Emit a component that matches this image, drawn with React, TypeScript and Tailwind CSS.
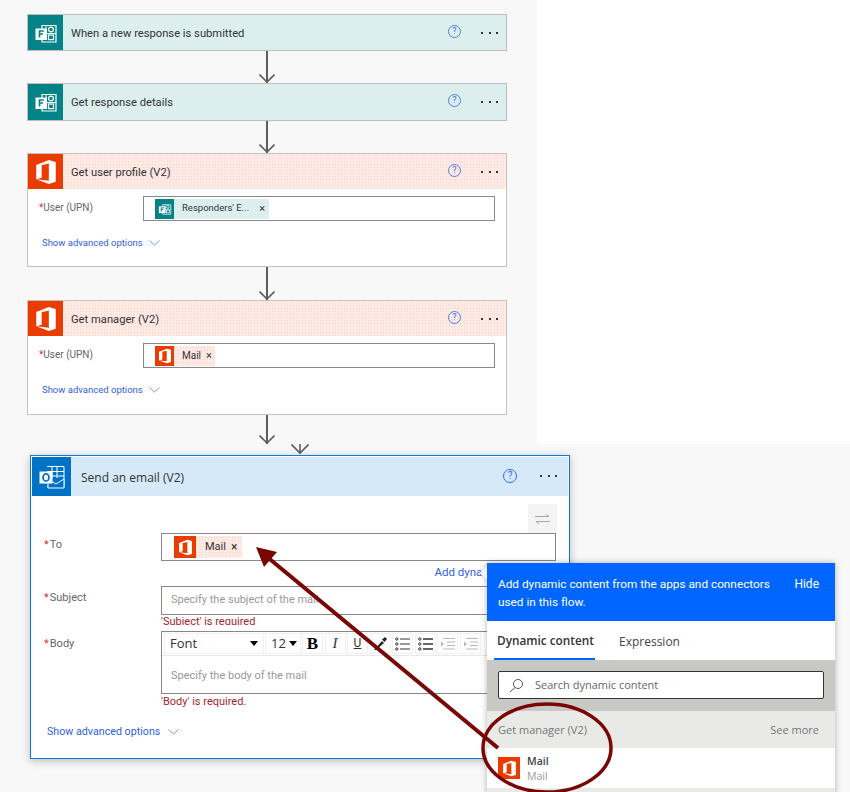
import React from "react";

const FONT = "font-['Roboto','Open_Sans',sans-serif]";
const OPEN = "font-['Open_Sans','Noto_Sans',sans-serif]";
const PINK = "bg-[#feeae5] bg-[radial-gradient(#fbd0c8_0.6px,transparent_0.7px)] bg-[length:3px_3px]";
const TEAL = "bg-[#dcefee] bg-[radial-gradient(#b9e2e2_0.6px,transparent_0.7px)] bg-[length:2px_2px]";
const TEXTURE = "bg-[#f8f8f8]";

function FormsIcon({ size = 24 }: { size?: number }) {
  return (
    <svg width={size} height={size} viewBox="0 0 24 24" fill="none">
      <path d="M8 4.5 H22 V21 H8 Z" stroke="#fff" strokeWidth="1.2" />
      <path d="M12 12.5 H22 M12 4.5 V9" stroke="#fff" strokeWidth="1" />
      <circle cx="17" cy="8.5" r="2.4" stroke="#fff" strokeWidth="1.2" />
      <rect x="14.5" y="14" width="5" height="4.6" stroke="#fff" strokeWidth="1.2" />
      <rect x="1.5" y="7.5" width="11.5" height="11.5" fill="#fff" />
      <path d="M5.5 16.5 V10 H9.8 M5.5 13 H9" stroke="#038387" strokeWidth="1.7" />
    </svg>
  );
}

function OfficeIcon({ size = 26 }: { size?: number }) {
  return (
    <svg width={size} height={size} viewBox="0 0 24 24">
      <path
        fillRule="evenodd"
        fill="#fff"
        d="M3 5.6 L14.6 1 L21 2.8 V21 L14.6 23 L3 18.7 Z M14.6 4.2 L8 5.8 V17.4 L3 18.7 L14.6 20 Z"
      />
    </svg>
  );
}

function OutlookIcon() {
  return (
    <svg width="26" height="26" viewBox="0 0 26 26" fill="none">
      <path d="M8 2.5 H25 V22.5 H8" stroke="#fff" strokeWidth="1" />
      <path d="M13 2.5 V14 M18 2.5 V14 M8 7.5 H25 M8 12 H25" stroke="#fff" strokeWidth="1" />
      <path d="M9 15 L17 20 L25 15 V24 H9 Z" fill="#0072c6" stroke="#fff" strokeWidth="1" />
      <rect x="0.5" y="7.5" width="13" height="12" fill="#fff" />
      <ellipse cx="7" cy="13.5" rx="3" ry="3.6" stroke="#0072c6" strokeWidth="1.8" />
    </svg>
  );
}

function Help({ big = false }: { big?: boolean }) {
  return (
    <span
      className={
        big
          ? "flex h-[14px] w-[14px] items-center justify-center rounded-full border border-[#2f6fe8] text-[10px] leading-none text-[#2f6fe8]"
          : "flex h-[13px] w-[13px] items-center justify-center rounded-full border border-[#4a80f0] text-[9px] leading-none text-[#3f6fe0]"
      }
    >
      ?
    </span>
  );
}

function Dots() {
  return (
    <span className="flex items-center gap-[5.5px]">
      <i className="h-[2px] w-[2px] bg-[#333]" />
      <i className="h-[2px] w-[2px] bg-[#333]" />
      <i className="h-[2px] w-[2px] bg-[#333]" />
    </span>
  );
}

function Header({
  tile,
  bg,
  title,
  icon,
}: {
  tile: string;
  bg: string;
  title: string;
  icon: React.ReactNode;
}) {
  return (
    <div className={`flex h-[35px] items-center ${bg}`}>
      <div className={`flex h-full w-[35px] shrink-0 items-center justify-center ${tile}`}>{icon}</div>
      <span className="ml-2 flex-1 pt-[3px] text-[11.2px] text-[#333]">{title}</span>
      <span className="mr-[20px] -mt-[3px]">
        <Help />
      </span>
      <span className="mr-[8px] w-[17px]">
        <Dots />
      </span>
    </div>
  );
}

function Connector({ h }: { h: string }) {
  return (
    <div className={`relative ml-[239px] w-[2px] bg-[#605e5c] ${h}`}>
      <svg
        className="absolute bottom-0 -left-[7px]"
        width="16"
        height="9"
        viewBox="0 0 16 9"
        fill="none"
      >
        <path d="M0.5 0.5 L8 8 L15.5 0.5" stroke="#605e5c" strokeWidth="1.6" />
      </svg>
    </div>
  );
}

function Chevron({ className = "" }: { className?: string }) {
  return (
    <svg className={className} width="11" height="6" viewBox="0 0 11 6" fill="none">
      <path d="M0.5 0.5 L5.5 5 L10.5 0.5" stroke="#5a8ee8" strokeWidth="0.9" />
    </svg>
  );
}

function UserCard({
  tile,
  title,
  chip,
  h,
}: {
  tile: string;
  title: string;
  chip: React.ReactNode;
  h: string;
}) {
  return (
    <div className={`border border-[#c4c2bf] bg-white ${h}`}>
      <Header tile={tile} bg={PINK} title={title} icon={<OfficeIcon />} />
      <div className="mt-[7px] flex pr-[11px]">
        <div className="w-[115px] pl-[11px] text-[10px] leading-[23px] text-[#666]">
          <span className="text-[#d13438]">*</span>
          <span>User (UPN)</span>
        </div>
        <div className="flex h-[25px] flex-1 items-center border border-[#8a8886] pl-[11px]">{chip}</div>
      </div>
      <div className="mt-[15px] flex items-center pl-[14px] text-[9.5px] text-[#2f5fe0]">
        Show advanced options
        <Chevron className="ml-[6px]" />
      </div>
    </div>
  );
}

function Field({ label, lead, children }: { label: string; lead: string; children: React.ReactNode }) {
  return (
    <div className="flex">
      <div className={`w-[129px] pl-[12px] text-[11px] text-[#666] ${lead}`}>
        <span className="text-[#d13438]">*</span>
        <span className="ml-[1px]">{label}</span>
      </div>
      <div className="flex-1">{children}</div>
    </div>
  );
}

function ToolButton({ children }: { children: React.ReactNode }) {
  return (
    <div className="flex h-[21px] w-[21px] items-center justify-center border border-[#f0f0f0]">{children}</div>
  );
}

function ListGlyph({ faded = false, num = false }: { faded?: boolean; num?: boolean }) {
  const c = faded ? "#b8b8b8" : "#333";
  return (
    <svg width="15" height="14" viewBox="0 0 15 14" fill="none">
      {faded ? (
        <>
          <path d="M3 1.5 H15 M7 5 H15 M7 8.5 H15 M3 12 H15" stroke={c} />
          <path d="M1 4.5 L4 7 L1 9.5 Z" fill={c} />
        </>
      ) : (
        <>
          <path d="M5 2 H15 M5 7 H15 M5 12 H15" stroke={c} strokeWidth={num ? 1.6 : 1} />
          <circle cx="1.8" cy="2" r="1.2" stroke={c} />
          <circle cx="1.8" cy="7" r="1.2" stroke={c} />
          <circle cx="1.8" cy="12" r="1.2" stroke={c} />
        </>
      )}
    </svg>
  );
}

function Caret() {
  return <span className="h-0 w-0 border-x-[4px] border-t-[5px] border-x-transparent border-t-black" />;
}

export default function App() {
  return (
    <div className={`relative h-[792px] w-[850px] overflow-hidden bg-white ${FONT}`}>
      {/* Upper canvas */}
      <div className={`h-[444px] w-[537px] pl-[27px] pt-[14px] ${TEXTURE}`}>
        <div className="w-[480px]">
          <div className="h-[37px] border border-[#bdbdbd]">
            <Header tile="bg-[#038387]" bg={TEAL} title="When a new response is submitted" icon={<FormsIcon />} />
          </div>
          <Connector h="h-[32px]" />
          <div className="h-[38px] border border-[#bdbdbd] [&>div]:h-[36px]">
            <Header tile="bg-[#038387]" bg={TEAL} title="Get response details" icon={<FormsIcon />} />
          </div>
          <Connector h="h-[32px]" />
          <UserCard
            tile="bg-[#eb3c00]"
            title="Get user profile (V2)"
            h="h-[114px]"
            chip={
              <div className={`flex h-[20px] items-center pr-[4px] ${TEAL}`}>
                <div className="flex h-[20px] w-[19px] items-center justify-center bg-[#038387]">
                  <FormsIcon size={14} />
                </div>
                <span className="ml-2 text-[9.5px] text-[#333]">Responders' E...</span>
                <span className="ml-[10px] text-[11px] leading-none text-[#333]">×</span>
              </div>
            }
          />
          <Connector h="h-[33px]" />
          <UserCard
            tile="bg-[#eb3c00]"
            title="Get manager (V2)"
            h="h-[115px]"
            chip={
              <div className={`flex h-[20px] items-center pr-[3px] ${PINK}`}>
                <div className="flex h-[20px] w-[19px] items-center justify-center bg-[#eb3c00]">
                  <OfficeIcon size={16} />
                </div>
                <span className="ml-2 text-[10px] text-[#333]">Mail</span>
                <span className="ml-[5px] text-[11px] leading-none text-[#333]">×</span>
              </div>
            }
          />
          <Connector h="h-[29px]" />
        </div>
      </div>

      {/* Lower canvas */}
      <div className={`h-[348px] pl-[30px] pt-[11px] ${TEXTURE}`}>
        <div className="h-[304px] w-[540px] border border-[#0f78d4] bg-white p-[1px] shadow-[0_2px_8px_rgba(0,0,0,0.25)]">
          <div className="flex h-[39px] items-center bg-[#d5e9f8]">
            <div className="flex h-full w-[39px] shrink-0 items-center justify-center bg-[#0072c6]">
              <OutlookIcon />
            </div>
            <span className={`ml-[10px] flex-1 pt-[2px] text-[12px] text-[#333] ${OPEN}`}>Send an email (V2)</span>
            <span className="mr-[23px] -mt-[2px]">
              <Help big />
            </span>
            <span className="mr-[6px] w-[22px] -mt-[1px]">
              <Dots />
            </span>
          </div>
          <div className="flex justify-end pr-[11px] pt-[8px]">
            <div className="flex h-[29px] w-[29px] items-center justify-center bg-[#f4f4f4]">
              <svg width="15" height="12" viewBox="0 0 15 12" fill="none">
                <path d="M0 3.5 H14 L11 1 M15 8.5 H1 L4 11" stroke="#a6a6a6" />
              </svg>
            </div>
          </div>
          <div className="pr-[12px]">
            <Field label="To" lead="leading-[24px]">
              <div className="flex h-[28px] items-center border border-[#8a8886] pl-[12px]">
                <div className={`flex h-[22px] items-center pr-[5px] ${PINK}`}>
                  <div className="flex h-[22px] w-[22px] items-center justify-center bg-[#eb3c00]">
                    <OfficeIcon size={17} />
                  </div>
                  <span className="ml-[9px] text-[11px] text-[#333]">Mail</span>
                  <span className="ml-[5px] text-[12px] leading-none text-[#333]">×</span>
                </div>
              </div>
              <div className="mt-[3px] pr-[13px] text-right text-[11.5px] leading-[16px] text-[#2f5fe0]">Add dynamic content</div>
            </Field>
            <div className="mt-[6px]">
              <Field label="Subject" lead="leading-[24px]">
                <div className="flex h-[29px] items-center border border-[#8a8886] pl-[9px] text-[11px] text-[#999]">
                  Specify the subject of the mail
                </div>
                <div className="h-[10px] overflow-hidden text-[11px] leading-[14px] text-[#a4262c]">'Subject' is required</div>
              </Field>
            </div>
            <div className="mt-[6px]">
              <Field label="Body" lead="leading-[26px]">
                <div className="h-[63px] border border-[#8a8886]">
                  <div className="flex h-[24px] items-center border-b border-[#e8e8e8] px-[2px]">
                    <div className={`flex h-[21px] w-[100px] items-center justify-between border border-[#f0f0f0] px-[5px] text-[13px] text-[#333] ${OPEN}`}>
                      Font
                      <Caret />
                    </div>
                    <div className={`ml-[1px] flex h-[21px] w-[36px] items-center gap-[3px] border border-[#f0f0f0] pl-[5px] text-[13px] text-[#333] ${OPEN}`}>
                      12
                      <Caret />
                    </div>
                    <div className="ml-[1px] flex gap-[1.5px]">
                      <ToolButton>
                        <span className="font-['Liberation_Serif',serif] text-[17px] font-bold text-black">B</span>
                      </ToolButton>
                      <ToolButton>
                        <span className="font-['Liberation_Serif',serif] text-[15px] italic text-[#333]">I</span>
                      </ToolButton>
                      <ToolButton>
                        <span className="text-[12px] leading-[13px] text-[#333] underline">U</span>
                      </ToolButton>
                      <ToolButton>
                        <svg width="15" height="15" viewBox="0 0 15 15">
                          <path d="M1 14 L9 5 L11 7 L3 14 Z M9 3.5 L12 1 L14 3 L11.5 6 Z" fill="#222" />
                        </svg>
                      </ToolButton>
                      <ToolButton>
                        <ListGlyph />
                      </ToolButton>
                      <ToolButton>
                        <ListGlyph num />
                      </ToolButton>
                      <ToolButton>
                        <ListGlyph faded />
                      </ToolButton>
                      <ToolButton>
                        <ListGlyph faded />
                      </ToolButton>
                    </div>
                  </div>
                  <div className="pl-[9px] pt-[12px] text-[11px] text-[#999]">Specify the body of the mail</div>
                </div>
                <div className="text-[11px] leading-[16px] text-[#a4262c]">'Body' is required.</div>
              </Field>
            </div>
          </div>
          <div className="mt-[14px] flex items-center pl-[15px] text-[10.7px] text-[#2f5fe0]">
            Show advanced options
            <Chevron className="ml-[8px]" />
          </div>
        </div>
      </div>

      {/* Second arrow head peeking above the card */}
      <svg className="absolute left-[291px] top-[444px]" width="18" height="12" viewBox="0 0 18 12" fill="none">
        <path d="M0.5 0.5 L9 9 L17.5 0.5 M9 0 V10" stroke="#605e5c" strokeWidth="1.6" />
      </svg>

      {/* Dynamic content flyout */}
      <div className="absolute left-[487px] top-[563px] h-[240px] w-[348px] bg-white shadow-[0_0_6px_rgba(0,0,0,0.3)]">
        <div className="absolute -left-[5px] top-[4px] h-[12px] w-[12px] rotate-45 bg-[#f3f3f3] shadow-[0_0_3px_rgba(0,0,0,0.2)]" />
        <div className="relative flex h-[58px] bg-[#0066ff] pl-[11px] pr-[16px] pt-[12px] text-[11.8px] leading-[18px] text-white">
          <span className="flex-1 whitespace-nowrap">
            Add dynamic content from the apps and connectors
            <br />
            used in this flow.
          </span>
          <span className="text-[12px]">Hide</span>
        </div>
        <div className={`flex h-[39px] pl-[7px] ${OPEN}`}>
          <div className="flex h-full w-[101px] items-center whitespace-nowrap border-b-2 border-[#0066ff] pl-[3px] pt-[2px] text-[11.8px] font-semibold text-[#333]">
            Dynamic content
          </div>
          <div className="ml-[24px] flex h-full items-center pt-[2px] text-[12px] text-[#444]">Expression</div>
        </div>
        <div className={`h-[51px] bg-[#c8c9c5] px-[11px] pt-[11px] ${OPEN}`}>
          <div className="flex h-[28px] items-center rounded-[2px] border border-[#333] bg-white pl-[10px] pt-[1px] text-[11px] text-[#666]">
            <svg width="15" height="15" viewBox="0 0 15 15" fill="none">
              <circle cx="9" cy="6" r="4.5" stroke="#555" />
              <path d="M6 9.5 L1 14" stroke="#555" />
            </svg>
            <span className="ml-[11px]">Search dynamic content</span>
          </div>
        </div>
        <div className={`flex h-[37px] items-center justify-between bg-[#e9eae7] pl-[11px] pr-[16px] pt-[2px] text-[11px] text-[#777] ${OPEN}`}>
          <span>Get manager (V2)</span>
          <span>See more</span>
        </div>
        <div className={`flex h-[40px] items-center pl-[11px] ${OPEN}`}>
          <div className="flex h-[22px] w-[22px] items-center justify-center bg-[#eb3c00]">
            <OfficeIcon size={17} />
          </div>
          <div className="ml-[7px] pt-[2px] text-[10.5px] leading-[15px]">
            <div className="font-semibold text-[#444]">Mail</div>
            <div className="text-[#999]">Mail</div>
          </div>
        </div>
        <div className="h-[20px] bg-[#e9eae7]" />
      </div>

      {/* Annotation drawn over the screenshot */}
      <svg className="pointer-events-none absolute left-0 top-0" width="850" height="792" viewBox="0 0 850 792" fill="none">
        <ellipse cx="547" cy="748" rx="64" ry="44" stroke="#7a0505" strokeWidth="3.5" />
        <path d="M498 748 L266 556" stroke="#7a0505" strokeWidth="4" />
        <path d="M256 547 L277 552 L264 567 Z" fill="#7a0505" />
      </svg>
    </div>
  );
}
